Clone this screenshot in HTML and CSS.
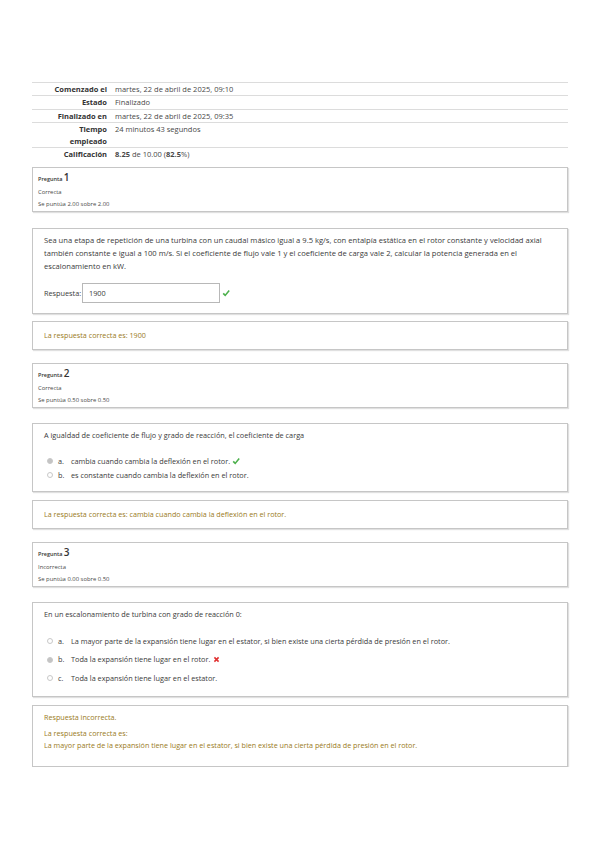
FILE: index.html
```html
<!DOCTYPE html>
<html lang="es">
<head>
<meta charset="utf-8">
<link rel="stylesheet" href="styles.css">
</head>
<body>
<div class="page">
  <div class="summary">
    <div class="row"><div class="lbl">Comenzado el</div><div class="val">martes, 22 de abril de 2025, 09:10</div></div>
    <div class="row"><div class="lbl">Estado</div><div class="val">Finalizado</div></div>
    <div class="row"><div class="lbl">Finalizado en</div><div class="val">martes, 22 de abril de 2025, 09:35</div></div>
    <div class="row"><div class="lbl">Tiempo empleado</div><div class="val">24 minutos 43 segundos</div></div>
    <div class="row"><div class="lbl">Calificación</div><div class="val"><b>8.25</b> de 10.00 (<b>82.5</b>%)</div></div>
  </div>

  <div class="box info i1">
    <div class="qline">Pregunta <span class="qno">1</span></div>
    <div class="small">Correcta</div>
    <div class="small">Se puntúa 2.00 sobre 2.00</div>
  </div>
  <div class="box content c1">
    <p class="qtext q1">Sea una etapa de repetición de una turbina con un caudal másico igual a 9.5 kg/s, con entalpía estática en el rotor constante y velocidad axial también constante e igual a 100 m/s. Si el coeficiente de flujo vale 1 y el coeficiente de carga vale 2, calcular la potencia generada en el escalonamiento en kW.</p>
    <div class="answer">
      <span class="alabel">Respuesta:</span>
      <span class="input">1900</span>
      <svg class="ok" viewBox="0 0 10 10" width="8" height="8"><path d="M1.5 5.5 L4 8 L9 2" fill="none" stroke="#4cb04c" stroke-width="2"/></svg>
    </div>
  </div>
  <div class="box feedback f1">La respuesta correcta es: 1900</div>

  <div class="box info i2">
    <div class="qline">Pregunta <span class="qno">2</span></div>
    <div class="small">Correcta</div>
    <div class="small">Se puntúa 0.50 sobre 0.50</div>
  </div>
  <div class="box content c2">
    <p class="qtext">A igualdad de coeficiente de flujo y grado de reacción, el coeficiente de carga</p>
    <div class="opts tight">
      <div class="opt"><span class="radio on"></span><span class="let">a.</span><span>cambia cuando cambia la deflexión en el rotor.</span>
        <svg class="ok" viewBox="0 0 10 10" width="8" height="8"><path d="M1.5 5.5 L4 8 L9 2" fill="none" stroke="#4cb04c" stroke-width="2"/></svg></div>
      <div class="opt"><span class="radio"></span><span class="let">b.</span><span>es constante cuando cambia la deflexión en el rotor.</span></div>
    </div>
  </div>
  <div class="box feedback">La respuesta correcta es: cambia cuando cambia la deflexión en el rotor.</div>

  <div class="box info i3">
    <div class="qline">Pregunta <span class="qno">3</span></div>
    <div class="small">Incorrecta</div>
    <div class="small">Se puntúa 0.00 sobre 0.50</div>
  </div>
  <div class="box content c3">
    <p class="qtext">En un escalonamiento de turbina con grado de reacción 0:</p>
    <div class="opts wide">
      <div class="opt"><span class="radio"></span><span class="let">a.</span><span>La mayor parte de la expansión tiene lugar en el estator, si bien existe una cierta pérdida de presión en el rotor.</span></div>
      <div class="opt"><span class="radio on"></span><span class="let">b.</span><span>Toda la expansión tiene lugar en el rotor.</span>
        <svg class="bad" viewBox="0 0 10 10" width="7" height="7"><path d="M2 2 L8 8 M8 2 L2 8" fill="none" stroke="#e03030" stroke-width="2.2"/></svg></div>
      <div class="opt"><span class="radio"></span><span class="let">c.</span><span>Toda la expansión tiene lugar en el estator.</span></div>
    </div>
  </div>
  <div class="box feedback f3">
    <div class="fb-line">Respuesta incorrecta.</div>
    <div class="fb-right">La respuesta correcta es:<br>La mayor parte de la expansión tiene lugar en el estator, si bien existe una cierta pérdida de presión en el rotor.</div>
  </div>
</div>
</body>
</html>
```

FILE: styles.css
```css
html, body {
  margin: 0;
  padding: 0;
  background: #ffffff;
}
body {
  font-family: "Open Sans", "DejaVu Sans", sans-serif;
  color: #3a3a3a;
}
.page {
  width: 536px;
  margin-left: 32px;
  padding-top: 82px;
}
.summary {
  font-size: 7.5px;
}
.row {
  display: flex;
  border-top: 1px solid #dcdcdc;
  line-height: 12.3px;
}
.lbl {
  width: 60px;
  margin-left: 15px;
  text-align: right;
  font-weight: 700;
  color: #333;
}
.val {
  margin-left: 8px;
  color: #484848;
}
.box {
  border: 1px solid #c6c6c6;
  box-shadow: 1px 1px 1px rgba(0, 0, 0, 0.12);
}
.info {
  margin-top: 13px;
  padding: 3px 5px;
  height: 37px;
}
.i1 {
  margin-top: 6px;
}
.i2 {
  margin-top: 13px;
}
.i3 {
  margin-top: 13px;
}
.qline {
  font-size: 5.5px;
  font-weight: 600;
  line-height: 13px;
  color: #333;
}
.qno {
  font-size: 10px;
  font-weight: 600;
}
.small {
  font-size: 5.9px;
  line-height: 12.5px;
  color: #484848;
}
.content {
  margin-top: 15px;
  padding: 5px 11px 10px;
  font-size: 7.3px;
  color: #3a3a3a;
}
.c1 {
  margin-top: 16px;
}
.qtext {
  margin: 0;
  line-height: 13px;
}
.q1 {
  font-size: 7.6px;
}
.answer {
  display: flex;
  align-items: center;
  margin-top: 10px;
  height: 20px;
}
.alabel {
  width: 38px;
}
.input {
  display: block;
  box-sizing: border-box;
  width: 138px;
  height: 20px;
  border: 1px solid #b8b8b8;
  padding-left: 6px;
  line-height: 18px;
}
.ok {
  margin-left: 2px;
}
.bad {
  margin-left: 3px;
}
.feedback {
  margin-top: 8px;
  padding: 0 11px;
  font-size: 7.2px;
  color: #9a7a1c;
  line-height: 27px;
}
.f1 {
  margin-top: 7px;
}
.c2 {
  padding-bottom: 9px;
}
.c3 {
  padding-bottom: 9px;
}
.opts {
  padding-left: 3px;
}
.tight {
  margin-top: 12px;
}
.tight .opt {
  line-height: 14px;
}
.wide {
  margin-top: 11px;
}
.wide .opt {
  line-height: 18.5px;
}
.opt {
  display: flex;
  align-items: center;
}
.radio {
  display: inline-block;
  box-sizing: border-box;
  width: 6px;
  height: 6px;
  border: 1px solid #c8c8c8;
  border-radius: 50%;
  margin-right: 5px;
}
.radio.on {
  background: #c4c4c4;
}
.let {
  width: 13px;
}
.f3 {
  padding: 5px 11px 15px;
  line-height: 12px;
}
.fb-line {
  margin-bottom: 4px;
}
```
